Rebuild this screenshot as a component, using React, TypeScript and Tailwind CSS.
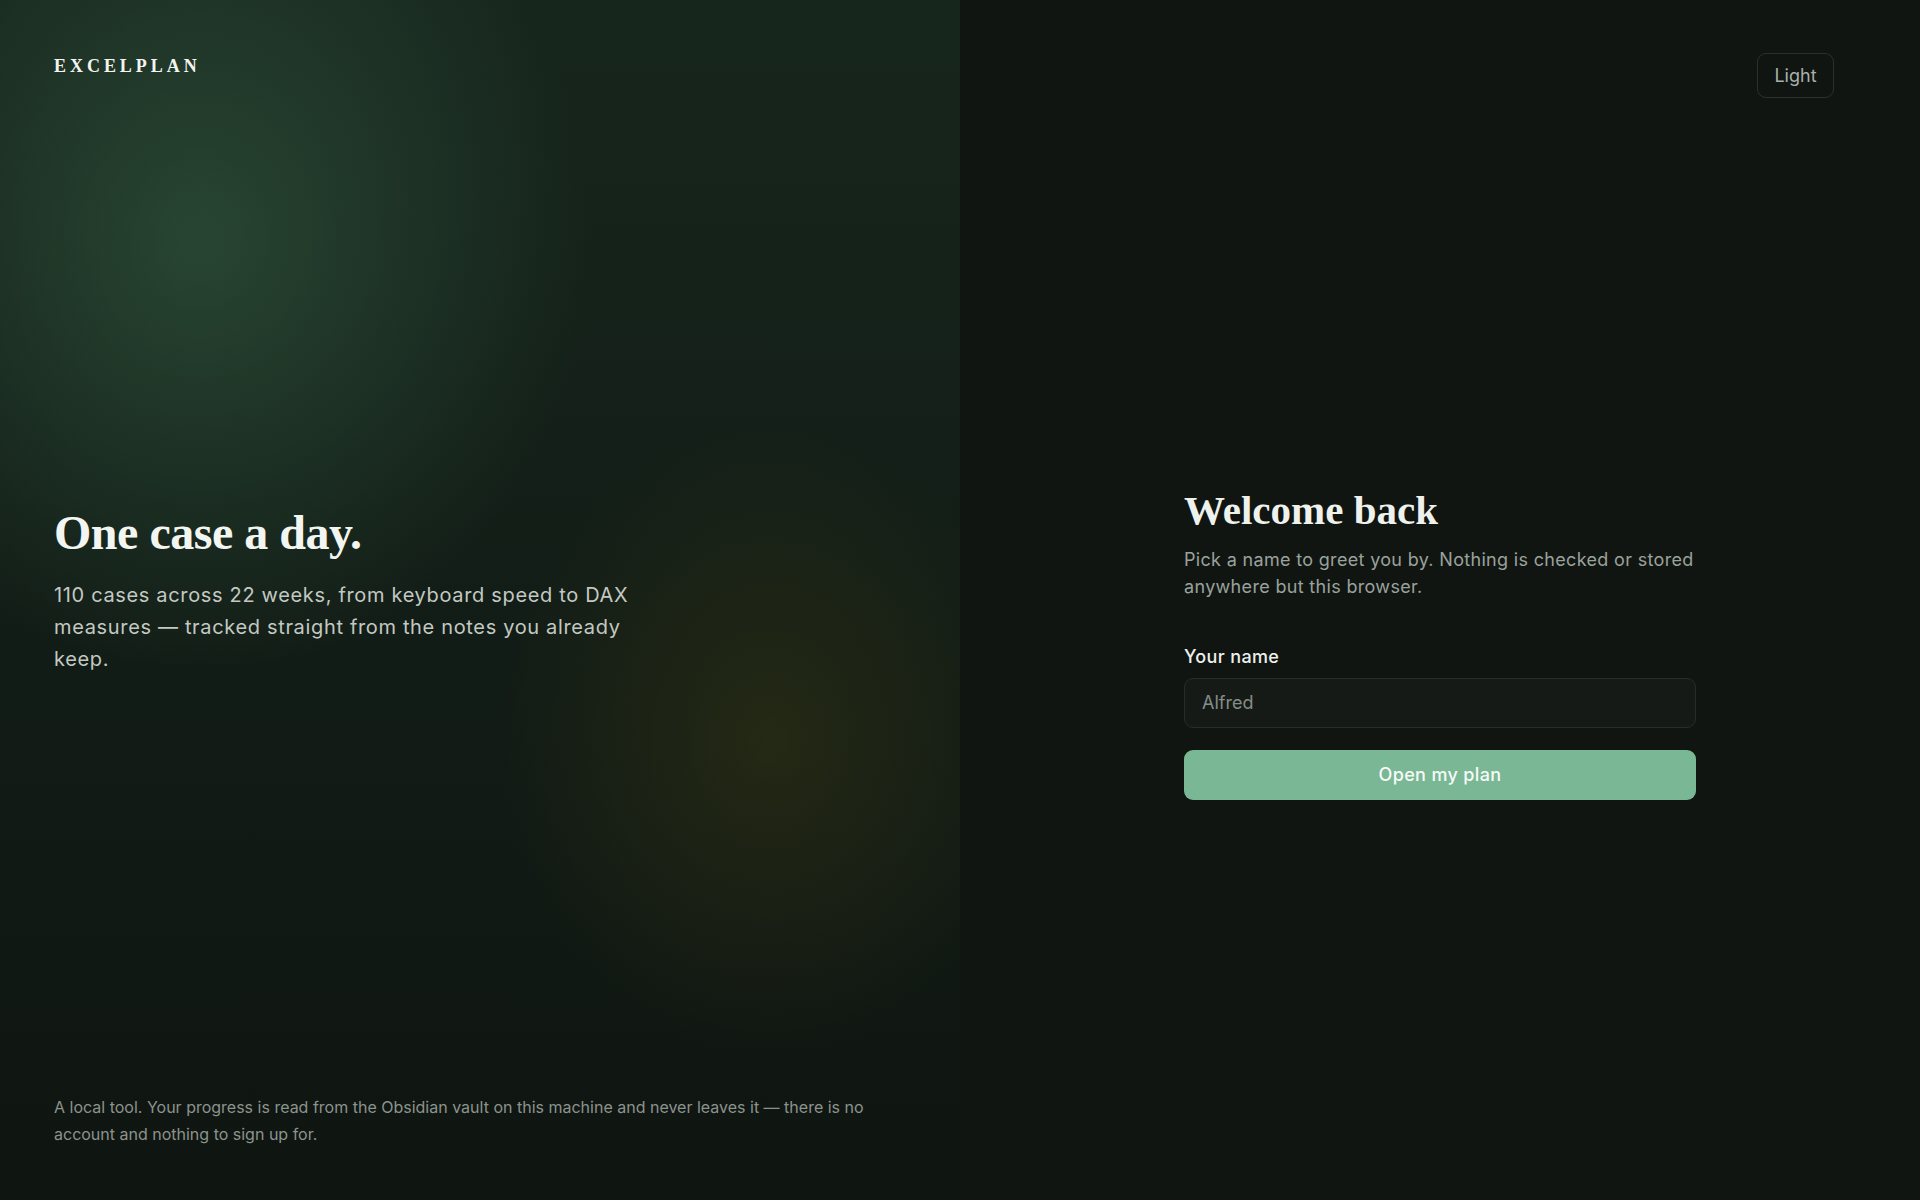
import { useState } from "react";

export default function App() {
  const [name, setName] = useState("");

  return (
    <div className="flex h-[1200px] w-full bg-[#111512] font-['Inter',sans-serif] text-[#e9ece8]">
      {/* left: brand panel */}
      <section className="flex w-[960px] flex-col bg-[#111a15] bg-[radial-gradient(ellipse_520px_580px_at_200px_240px,rgba(52,92,66,0.6),transparent_75%),radial-gradient(ellipse_360px_420px_at_770px_740px,rgba(52,52,20,0.55),transparent_75%),linear-gradient(180deg,#17261d_0%,#121c16_55%,#0f1511_100%)] px-[54px] pb-[52px] pt-[53px]">
        <div className="font-['Liberation_Serif',serif] text-[18px] font-bold leading-[27px] tracking-[0.22em] text-[#f2f4ef]">
          EXCELPLAN
        </div>

        <div className="flex flex-1 flex-col justify-center pt-2">
          <h1 className="font-['Liberation_Serif',serif] text-[48px] font-bold leading-[1.1] tracking-[-0.01em] text-[#f3f5f0]">
            One case a day.
          </h1>
          <p className="mt-5 max-w-[600px] text-[20px] leading-[32px] tracking-[0.033em] text-[#c3c9c2]">
            110 cases across 22 weeks, from keyboard speed to DAX measures — tracked straight from the notes you already keep.
          </p>
        </div>

        <p className="text-[16px] leading-[27px] text-[#8c938d]">
          A local tool. Your progress is read from the Obsidian vault on this machine and never leaves it — there is no account and nothing to sign up for.
        </p>
      </section>

      {/* right: sign in */}
      <section className="flex w-[960px] flex-col">
        <div className="flex justify-end pr-[86px] pt-[53px]">
          <button className="h-[45px] w-[77px] rounded-[9px] border border-[#2a302c] text-[18px] text-[#a9b0aa]">
            Light
          </button>
        </div>

        <div className="flex flex-1 items-center justify-center pb-[13px]">
          <form className="w-[512px]" onSubmit={(e) => e.preventDefault()}>
            <h2 className="font-['Liberation_Serif',serif] text-[41px] font-bold leading-[48px] text-[#eef1ec]">
              Welcome back
            </h2>
            <p className="mt-3 text-[18px] leading-[27px] tracking-[0.018em] text-[#9aa29c]">
              Pick a name to greet you by. Nothing is checked or stored anywhere but this browser.
            </p>

            <label htmlFor="name" className="mt-[43px] block text-[18px] font-medium leading-[27px] tracking-[0.02em] text-[#eef1ec]">
              Your name
            </label>
            <input
              id="name"
              value={name}
              onChange={(e) => setName(e.target.value)}
              placeholder="Alfred"
              className="mt-2 h-[50px] w-full rounded-[9px] border border-[#272d29] bg-[#151a17] px-[17px] text-[18px] text-[#e9ece8] outline-none placeholder:text-[#858d87]"
            />
            <button
              type="submit"
              className="mt-[22px] h-[50px] w-full rounded-[9px] bg-[#79b795] text-[18px] font-medium tracking-[0.02em] text-[#f7faf7]"
            >
              Open my plan
            </button>
          </form>
        </div>
      </section>
    </div>
  );
}
